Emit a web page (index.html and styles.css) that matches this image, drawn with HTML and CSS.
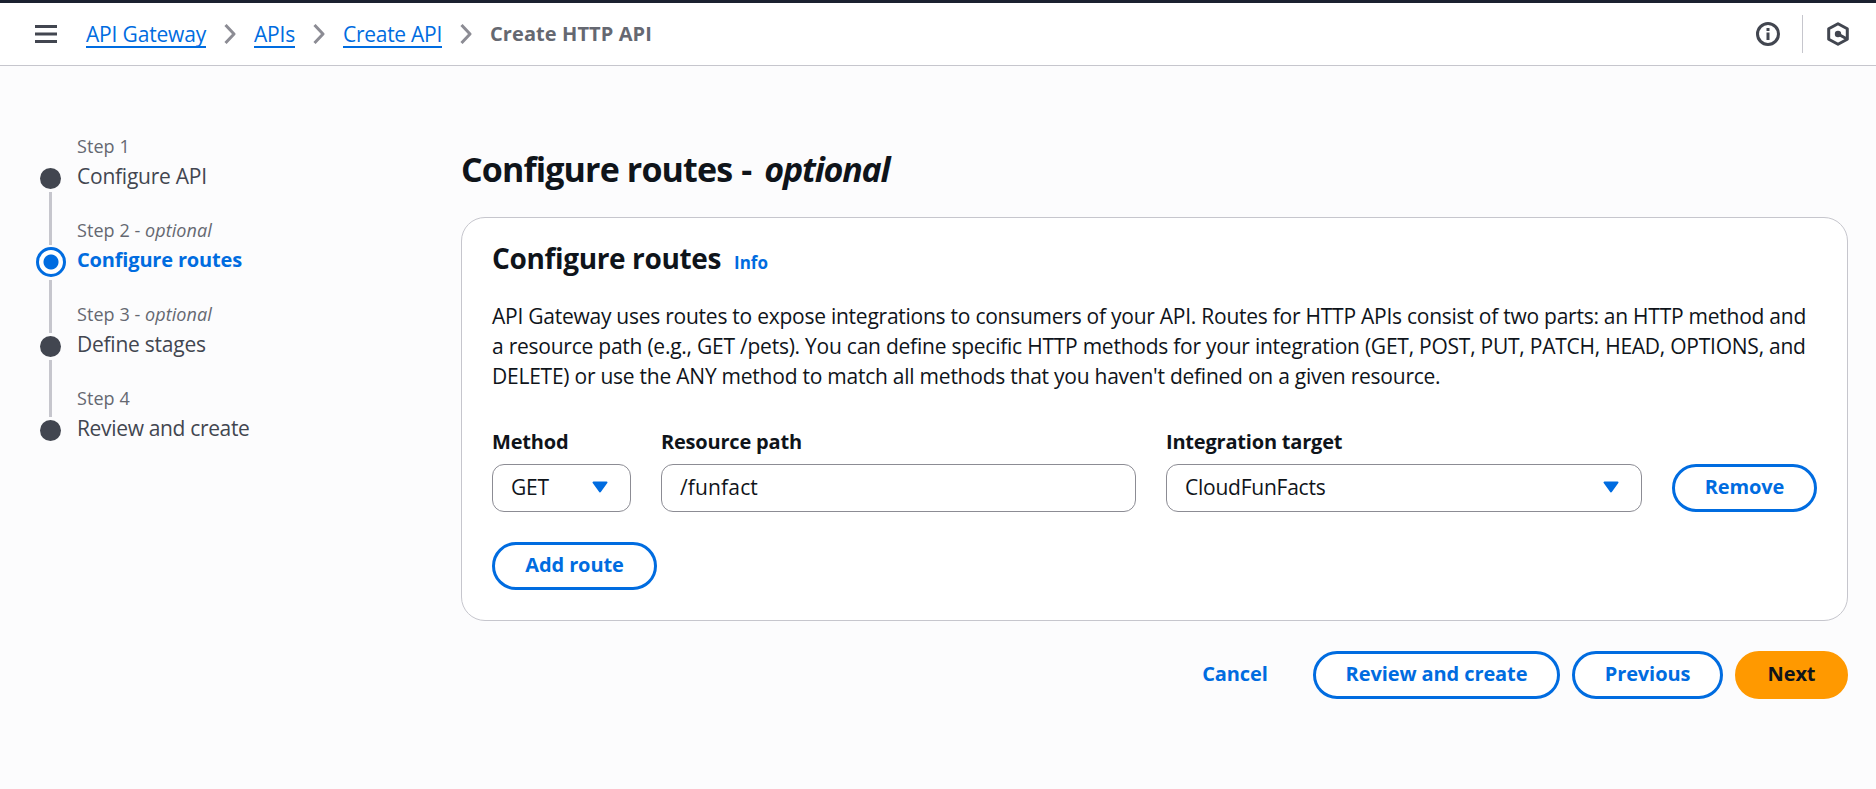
FILE: index.html
```
<!DOCTYPE html>
<html lang="en">
<head>
<meta charset="utf-8">
<title>Create HTTP API</title>
<link rel="stylesheet" href="styles.css">
</head>
<body>
<header class="topbar">
  <svg class="menu" width="22" height="18" viewBox="0 0 22 18" fill="none" stroke="#424650" stroke-width="3"><path d="M0 1.5h22M0 9h22M0 16.5h22"/></svg>
  <nav class="crumbs">
    <a class="crumb crumb-gateway">API Gateway</a>
    <svg class="chev" width="12" height="20" viewBox="0 0 12 20"><path d="M1.5 1l8.5 9-8.500 9"/></svg>
    <a class="crumb crumb-apis">APIs</a>
    <svg class="chev" width="12" height="20" viewBox="0 0 12 20"><path d="M1.5 1l8.5 9-8.500 9"/></svg>
    <a class="crumb crumb-create">Create API</a>
    <svg class="chev" width="12" height="20" viewBox="0 0 12 20"><path d="M1.5 1l8.5 9-8.500 9"/></svg>
    <span class="crumb-current">Create HTTP API</span>
  </nav>
  <div class="tools">
    <svg width="24" height="24" viewBox="0 0 24 24"><circle cx="12" cy="12" r="10.5" fill="none" stroke="#424650" stroke-width="3"/><path d="M10.5 6h3v3h-3zM10.5 10.5h3V18h-3z" fill="#424650"/></svg>
    <span class="divider"></span>
    <svg class="hex" width="24" height="24" viewBox="0 0 24 24" fill="none" stroke="#424650" stroke-width="3" stroke-linejoin="round"><path d="M12 1.800l9.300 5v10.400l-9.300 5-9.300-5V6.800z"/><path d="M12 12l9 5"/><circle cx="12" cy="12" r="3.200" fill="#424650" stroke="none"/></svg>
  </div>
</header>
<div class="layout">
  <ol class="steps">
    <li class="step"><span class="rail"><i class="dot"></i><i class="line"></i></span><div><div class="step-no">Step 1</div><div class="step-name">Configure API</div></div></li>
    <li class="step"><span class="rail rail-active"><i class="dot"></i><i class="line"></i></span><div><div class="step-no">Step 2 - <em>optional</em></div><div class="step-name step-active">Configure routes</div></div></li>
    <li class="step"><span class="rail"><i class="dot"></i><i class="line line-long"></i></span><div><div class="step-no">Step 3 - <em>optional</em></div><div class="step-name">Define stages</div></div></li>
    <li class="step"><span class="rail"><i class="dot"></i></span><div><div class="step-no">Step 4</div><div class="step-name step-review">Review and create</div></div></li>
  </ol>
  <main class="content">
    <h1 class="title">Configure routes <span class="dash">-</span> <em>optional</em></h1>
    <section class="card">
      <div class="card-head"><h2>Configure routes</h2><a class="info">Info</a></div>
      <p class="desc"><span class="d1">API Gateway uses routes to expose integrations to consumers of your API. Routes for HTTP APIs consist of two parts: an HTTP method and</span><br><span>a resource path (e.g., GET /pets). You can define specific HTTP methods for your integration (GET, POST, PUT, PATCH, HEAD, OPTIONS, and</span><br><span>DELETE) or use the ANY method to match all methods that you haven't defined on a given resource.</span></p>
      <div class="route">
        <div class="field"><div class="label">Method</div><div class="control"><span>GET</span><svg class="caret" width="16" height="12" viewBox="0 0 16 12"><path d="M1.500 1.500h13L8 10.500z"/></svg></div></div>
        <div class="field"><div class="label">Resource path</div><div class="control"><span class="path">/funfact</span></div></div>
        <div class="field"><div class="label">Integration target</div><div class="control"><span>CloudFunFacts</span><svg class="caret" width="16" height="12" viewBox="0 0 16 12"><path d="M1.500 1.500h13L8 10.500z"/></svg></div></div>
        <button class="btn remove">Remove</button>
      </div>
      <button class="btn add">Add route</button>
    </section>
    <div class="actions">
      <button class="btn cancel">Cancel</button>
      <button class="btn review">Review and create</button>
      <button class="btn previous">Previous</button>
      <button class="btn next">Next</button>
    </div>
  </main>
</div>
</body>
</html>
```
FILE: styles.css
```
* { box-sizing: border-box; }
body {
  margin: 0;
  min-height: 789px;
  background: #fcfcfd;
  color: #0f141a;
  font: 21px/30px "Open Sans", "Noto Sans", sans-serif;
  letter-spacing: -0.24px;
}
.topbar {
  display: flex;
  align-items: center;
  height: 66px;
  padding: 0 26px 0 35px;
  background: #fff;
  border-top: 3px solid #1b2130;
  border-bottom: 1px solid #c6c6cd;
}
.menu { margin-right: 29px; }
.crumbs { display: flex; align-items: center; gap: 18px; white-space: nowrap; }
.chev { fill: none; stroke: #8c8c94; stroke-width: 3; stroke-linejoin: round; }
.crumb {
  height: 28px;
  color: #006ce0;
  line-height: 29px;
  border-bottom: 2px solid #006ce0;
}
.crumb-gateway { width: 120px; letter-spacing: -0.17px; }
.crumb-apis { width: 41px; letter-spacing: -0.2px; }
.crumb-create { width: 99px; letter-spacing: -0.28px; }
.crumb-current { color: #656871; font-size: 20px; font-weight: 700; letter-spacing: 0.09px; }
.tools { display: flex; align-items: center; gap: 22px; margin-left: auto; }
.hex { margin-left: 1px; }
.divider { width: 1px; height: 38px; background: #c6c6cd; }
.layout { display: flex; padding: 68px 28px 0 35px; }
.steps { flex: none; width: 426px; margin: 0; padding: 0; list-style: none; }
.step { display: flex; gap: 11px; height: 84px; }
.rail {
  display: flex;
  flex-direction: column;
  align-items: center;
  gap: 3px;
  width: 31px;
  padding-top: 34px;
}
.dot { flex: none; width: 21px; height: 21px; border-radius: 50%; background: #424650; }
.line { flex: none; width: 3px; height: 53px; background: #c6c6cd; }
.line-long { height: 57px; }
.rail-active { padding-top: 29px; }
.rail-active .dot {
  width: 30px;
  height: 30px;
  border: 3px solid #006ce0;
  background: radial-gradient(circle, #006ce0 7px, #fff 8px);
}
.step-no { color: #656871; font-size: 18px; line-height: 24px; letter-spacing: 0.06px; }
.step-name { margin-top: 3px; color: #424650; }
.step-review { letter-spacing: -0.34px; }
.step-active { color: #006ce0; font-size: 20px; font-weight: 700; letter-spacing: -0.17px; }
.content { flex: 1; min-width: 0; padding-top: 13px; }
.title {
  margin: 0 0 25px;
  font-size: 34px;
  font-weight: 700;
  line-height: 45px;
  letter-spacing: -0.87px;
}
.title em { letter-spacing: -1.2px; }
.dash { margin: 0 5px 0 1px; }
.card {
  height: 404px;
  padding: 22px 30px 29px;
  border: 1px solid #c6c6cd;
  border-radius: 24px;
  background: #fff;
}
.card-head { display: flex; align-items: baseline; gap: 13px; height: 36px; }
h2 { margin: 0; font-size: 28px; font-weight: 700; line-height: 36px; letter-spacing: -0.36px; }
.info { color: #006ce0; font-size: 17px; font-weight: 700; letter-spacing: 0; }
.desc { margin: 25px 0 36px; white-space: nowrap; }
.d1 { letter-spacing: -0.25px; }
.route {
  display: grid;
  grid-template-columns: 139px 475px 476px 145px;
  gap: 30px;
  align-items: end;
}
.label { margin-bottom: 7px; font-size: 20px; font-weight: 700; letter-spacing: -0.2px; }
.control {
  display: flex;
  align-items: center;
  justify-content: space-between;
  height: 48px;
  padding: 0 22px 2px 18px;
  border: 1px solid #8c8c94;
  border-radius: 12px;
  background: #fff;
}
.path { letter-spacing: 0.15px; }
.caret { fill: #006ce0; stroke: #006ce0; stroke-width: 2; stroke-linejoin: round; }
.btn {
  height: 48px;
  padding: 0 0 2px;
  border: 3px solid #006ce0;
  border-radius: 30px;
  background: #fff;
  color: #006ce0;
  font: 700 20px/30px "Open Sans", "Noto Sans", sans-serif;
  letter-spacing: -0.1px;
}
.add { display: block; width: 165px; margin-top: 30px; }
.actions { display: flex; justify-content: flex-end; gap: 12px; margin-top: 30px; }
.cancel { width: 132px; border-color: transparent; background: transparent; }
.review { width: 247px; }
.previous { width: 151px; }
.next { width: 113px; border-color: #ff9900; background: #ff9900; color: #0f141a; }
```
